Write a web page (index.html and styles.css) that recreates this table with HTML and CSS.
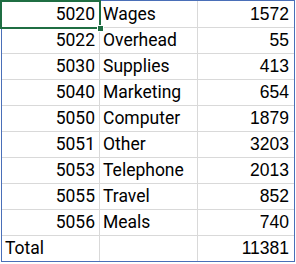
FILE: index.html
```html
<!DOCTYPE html>
<html>
<head>
<meta charset="utf-8">
<link rel="stylesheet" href="styles.css">
</head>
<body>
<div class="wrap">
  <div class="sheet">
    <div class="cell num first">5020</div><div class="cell txt first">Wages</div><div class="cell amt first">1572</div>
    <div class="cell num">5022</div><div class="cell txt">Overhead</div><div class="cell amt">55</div>
    <div class="cell num">5030</div><div class="cell txt">Supplies</div><div class="cell amt">413</div>
    <div class="cell num">5040</div><div class="cell txt">Marketing</div><div class="cell amt">654</div>
    <div class="cell num">5050</div><div class="cell txt">Computer</div><div class="cell amt">1879</div>
    <div class="cell num">5051</div><div class="cell txt">Other</div><div class="cell amt">3203</div>
    <div class="cell num">5053</div><div class="cell txt">Telephone</div><div class="cell amt">2013</div>
    <div class="cell num">5055</div><div class="cell txt">Travel</div><div class="cell amt">852</div>
    <div class="cell num">5056</div><div class="cell txt">Meals</div><div class="cell amt">740</div>
    <div class="cell txt">Total</div><div class="cell txt"></div><div class="cell amt">11381</div>
  </div>
  <div class="selection"><span class="handle"></span></div>
</div>
</body>
</html>
```
FILE: styles.css
```css
html, body {
  margin: 0;
  padding: 0;
  background: #ffffff;
}

.wrap {
  position: relative;
  width: 296px;
  height: 264px;
}

.sheet {
  margin-left: 1px;
  width: 292px;
  border: 1px solid #4a6fb8;
  background: #d9d9d9;
  display: grid;
  grid-template-columns: 97px 97px 96px;
  grid-template-rows: 26px repeat(9, 25px);
  column-gap: 1px;
  row-gap: 1px;
}

.cell {
  background: #ffffff;
  line-height: 25px;
  font-size: 17.5px;
  color: #000000;
  white-space: nowrap;
  overflow: hidden;
}

.cell.first {
  line-height: 27px;
}

.num {
  font-family: Roboto, "Liberation Sans", sans-serif;
  text-align: right;
  padding-right: 4px;
}

.txt {
  font-family: Roboto, "Liberation Sans", sans-serif;
  text-align: left;
  padding-left: 3px;
}

.amt {
  font-family: "Liberation Sans", Arial, sans-serif;
  text-align: right;
  padding-right: 5px;
}

.selection {
  position: absolute;
  left: 0;
  top: 0;
  width: 97px;
  height: 25px;
  border: 2px solid #1f6e43;
}

.handle {
  position: absolute;
  right: -5px;
  bottom: -5px;
  width: 5px;
  height: 5px;
  background: #1f6e43;
  border: 1px solid #ffffff;
}
```
